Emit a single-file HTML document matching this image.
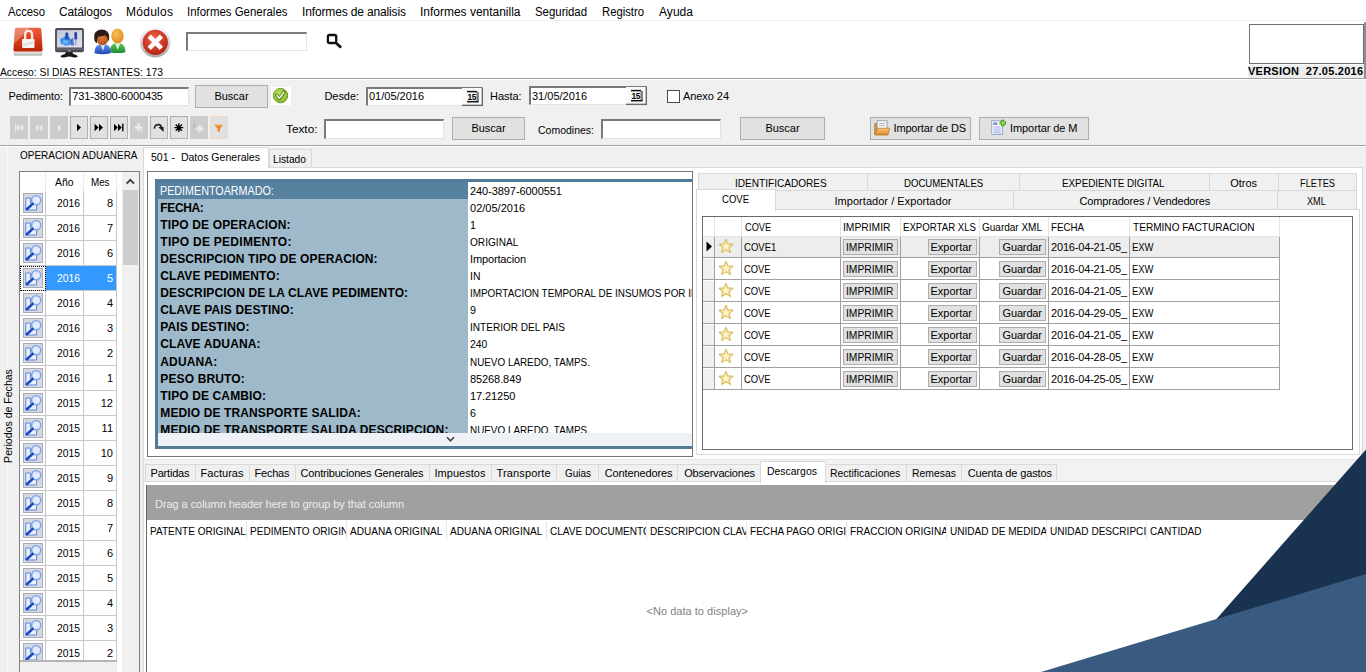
<!DOCTYPE html>
<html><head><meta charset="utf-8"><title>UI</title><style>html,body{margin:0;padding:0;}body{width:1366px;height:672px;overflow:hidden;position:relative;background:#f0f0f0;font-family:"Liberation Sans",sans-serif;}
.r{position:absolute;}
.t{position:absolute;white-space:pre;line-height:20px;font-family:"Liberation Sans",sans-serif;}
.ic{width:20px;height:20px;box-sizing:border-box;background:#d6dae2;border:1px solid #a9adb6;}
</style></head><body>
<div class="r" style="left:0px;top:0px;width:1366px;height:672px;background:#f0f0f0;"></div>
<div class="r" style="left:0px;top:0px;width:1366px;height:79px;background:#fff;"></div>
<div class="r" style="left:0px;top:20px;width:1366px;height:1px;background:#f0f0f0;"></div>
<div class="t" style="left:7.50px;top:2px;font-size:12px;transform:scaleX(0.9402);transform-origin:0 0;color:#000;">Acceso</div>
<div class="t" style="left:59.00px;top:2px;font-size:12px;letter-spacing:-0.129px;color:#000;">Catálogos</div>
<div class="t" style="left:126.00px;top:2px;font-size:12px;letter-spacing:0.274px;color:#000;">Módulos</div>
<div class="t" style="left:187.00px;top:2px;font-size:12px;transform:scaleX(0.9537);transform-origin:0 0;color:#000;">Informes Generales</div>
<div class="t" style="left:302.00px;top:2px;font-size:12px;letter-spacing:-0.143px;color:#000;">Informes de analisis</div>
<div class="t" style="left:420.00px;top:2px;font-size:12px;letter-spacing:-0.012px;color:#000;">Informes ventanilla</div>
<div class="t" style="left:535.00px;top:2px;font-size:12px;transform:scaleX(0.9505);transform-origin:0 0;color:#000;">Seguridad</div>
<div class="t" style="left:602.00px;top:2px;font-size:12px;transform:scaleX(0.9399);transform-origin:0 0;color:#000;">Registro</div>
<div class="t" style="left:659.00px;top:2px;font-size:12px;letter-spacing:0.048px;color:#000;">Ayuda</div>
<div class="r" style="left:186px;top:32px;width:121px;height:19px;background:#fff;border:1px solid #e3e3e3;box-sizing:border-box;border-top:2px solid #7a7a7a;border-left:2px solid #7a7a7a;"></div>
<div class="t" style="left:0.00px;top:62px;font-size:11px;transform:scaleX(0.9367);transform-origin:0 0;color:#000;">Acceso: SI DIAS RESTANTES: 173</div>
<div class="r" style="left:1249px;top:24px;width:115px;height:40px;background:#fff;border:1px solid #707070;box-sizing:border-box;"></div>
<div class="r" style="left:1248px;top:65px;width:116px;height:13px;background:#ededed;"></div>
<div class="r" style="left:1364px;top:22px;width:2px;height:56px;background:#8e8e8e;"></div>
<div class="t" style="left:1248.00px;top:61px;font-size:11px;font-weight:bold;letter-spacing:0.240px;color:#000;">VERSION  27.05.2016</div>
<div class="r" style="left:0px;top:78px;width:1366px;height:1px;background:#a0a0a0;"></div>
<div class="r" style="left:0px;top:79px;width:1366px;height:1px;background:#fff;"></div>
<div class="r" style="left:0px;top:145px;width:1366px;height:1px;background:#a0a0a0;"></div>
<div class="r" style="left:0px;top:146px;width:1366px;height:1px;background:#fff;"></div>
<div class="t" style="left:8.50px;top:86px;font-size:11px;letter-spacing:-0.127px;color:#000;">Pedimento:</div>
<div class="r" style="left:69px;top:87px;width:120px;height:19px;background:#fff;border:1px solid #e3e3e3;box-sizing:border-box;border-top:2px solid #7a7a7a;border-left:2px solid #7a7a7a;"></div>
<div class="t" style="left:72.30px;top:86px;font-size:11px;letter-spacing:-0.152px;color:#000;">731-3800-6000435</div>
<div class="r" style="left:195px;top:85px;width:73px;height:23px;background:#e1e1e1;border:1px solid #adadad;box-sizing:border-box;"></div>
<div class="t" style="left:214.38px;top:86px;font-size:11px;color:#000;">Buscar</div>
<div class="r" style="left:271px;top:87px;width:20px;height:18px;background:#fff;"></div>
<div class="t" style="left:324.50px;top:86px;font-size:11px;letter-spacing:-0.071px;color:#000;">Desde:</div>
<div class="r" style="left:366px;top:87px;width:117px;height:19px;background:#fff;border:1px solid #e3e3e3;box-sizing:border-box;border-top:2px solid #7a7a7a;border-left:2px solid #7a7a7a;"></div>
<div class="t" style="left:369.00px;top:86px;font-size:11px;letter-spacing:-0.006px;color:#000;">01/05/2016</div>
<div class="t" style="left:490.00px;top:86px;font-size:11px;letter-spacing:-0.058px;color:#000;">Hasta:</div>
<div class="r" style="left:529px;top:86px;width:118px;height:19px;background:#fff;border:1px solid #e3e3e3;box-sizing:border-box;border-top:2px solid #7a7a7a;border-left:2px solid #7a7a7a;"></div>
<div class="t" style="left:532.00px;top:86px;font-size:11px;letter-spacing:-0.006px;color:#000;">31/05/2016</div>
<div class="r" style="left:667px;top:90px;width:13px;height:13px;background:#fff;border:1px solid #4a4a4a;box-sizing:border-box;"></div>
<div class="t" style="left:683.00px;top:86px;font-size:11px;letter-spacing:-0.069px;color:#000;">Anexo 24</div>
<div class="t" style="left:285.50px;top:119px;font-size:11px;transform:scaleX(1.0733);transform-origin:0 0;color:#000;">Texto:</div>
<div class="r" style="left:324px;top:119px;width:120px;height:20px;background:#fff;border:1px solid #e3e3e3;box-sizing:border-box;border-top:2px solid #7a7a7a;border-left:2px solid #7a7a7a;"></div>
<div class="r" style="left:452px;top:117px;width:73px;height:23px;background:#e1e1e1;border:1px solid #adadad;box-sizing:border-box;"></div>
<div class="t" style="left:471.38px;top:118px;font-size:11px;color:#000;">Buscar</div>
<div class="t" style="left:538.00px;top:120px;font-size:11px;transform:scaleX(0.9541);transform-origin:0 0;color:#000;">Comodines:</div>
<div class="r" style="left:601px;top:119px;width:120px;height:20px;background:#fff;border:1px solid #e3e3e3;box-sizing:border-box;border-top:2px solid #7a7a7a;border-left:2px solid #7a7a7a;"></div>
<div class="r" style="left:740px;top:117px;width:85px;height:23px;background:#e1e1e1;border:1px solid #adadad;box-sizing:border-box;"></div>
<div class="t" style="left:765.38px;top:118px;font-size:11px;color:#000;">Buscar</div>
<div class="r" style="left:870px;top:117px;width:101px;height:23px;background:#e1e1e1;border:1px solid #adadad;box-sizing:border-box;"></div>
<div class="t" style="left:893.50px;top:118px;font-size:11px;letter-spacing:-0.160px;color:#000;">Importar de DS</div>
<div class="r" style="left:979px;top:117px;width:110px;height:23px;background:#e1e1e1;border:1px solid #adadad;box-sizing:border-box;"></div>
<div class="t" style="left:1010.00px;top:118px;font-size:11px;letter-spacing:-0.080px;color:#000;">Importar de M</div>
<div class="r" style="left:10px;top:116px;width:18px;height:23px;background:#cccccc;"></div>
<div class="r" style="left:30px;top:116px;width:18px;height:23px;background:#cccccc;"></div>
<div class="r" style="left:50px;top:116px;width:18px;height:23px;background:#cccccc;"></div>
<div class="r" style="left:70px;top:116px;width:18px;height:23px;background:#e1e1e1;border:1px solid #b0b0b0;box-sizing:border-box;"></div>
<div class="r" style="left:90px;top:116px;width:18px;height:23px;background:#e1e1e1;border:1px solid #b0b0b0;box-sizing:border-box;"></div>
<div class="r" style="left:110px;top:116px;width:18px;height:23px;background:#e1e1e1;border:1px solid #b0b0b0;box-sizing:border-box;"></div>
<div class="r" style="left:130px;top:116px;width:18px;height:23px;background:#cccccc;"></div>
<div class="r" style="left:150px;top:116px;width:18px;height:23px;background:#e1e1e1;border:1px solid #b0b0b0;box-sizing:border-box;"></div>
<div class="r" style="left:170px;top:116px;width:18px;height:23px;background:#e1e1e1;border:1px solid #b0b0b0;box-sizing:border-box;"></div>
<div class="r" style="left:190px;top:116px;width:18px;height:23px;background:#cccccc;"></div>
<div class="r" style="left:210px;top:116px;width:18px;height:23px;background:#e1e1e1;border:1px solid #f3d9bf;box-sizing:border-box;"></div>
<div class="t" style="left:19.50px;top:145px;font-size:11px;transform:scaleX(0.9067);transform-origin:0 0;color:#000;">OPERACION ADUANERA</div>
<div class="r" style="left:19px;top:171px;width:121px;height:501px;background:#fff;border:1px solid #808080;box-sizing:border-box;border-bottom:none;"></div>
<div class="r" style="left:122px;top:172px;width:17px;height:500px;background:#f0f0f0;"></div>
<div class="r" style="left:123px;top:190px;width:15px;height:75px;background:#cdcdcd;"></div>
<svg class="r" style="left:125px;top:177px" width="11" height="8" viewBox="0 0 11 8"><path d="M1.6 6.7 L5.3 2.8 L9 6.7" fill="none" stroke="#404040" stroke-width="1.9"/></svg>
<div class="r" style="left:20px;top:172px;width:96px;height:19px;background:#fff;"></div>
<div class="t" style="left:54.50px;top:172px;font-size:11px;transform:scaleX(0.9452);transform-origin:0 0;color:#000;">Año</div>
<div class="t" style="left:90.50px;top:172px;font-size:11px;transform:scaleX(0.8902);transform-origin:0 0;color:#000;">Mes</div>
<div class="r" style="left:45px;top:191px;width:1px;height:470px;background:#c8c8c8;"></div>
<div class="r" style="left:83px;top:191px;width:1px;height:470px;background:#c8c8c8;"></div>
<div class="r" style="left:116px;top:191px;width:1px;height:470px;background:#c8c8c8;"></div>
<div class="r" style="left:45px;top:172px;width:1px;height:19px;background:#ececec;"></div>
<div class="r" style="left:83px;top:172px;width:1px;height:19px;background:#ececec;"></div>
<div class="r" style="left:116px;top:172px;width:1px;height:19px;background:#ececec;"></div>
<div class="r" style="left:20px;top:215px;width:97px;height:1px;background:#c8c8c8;"></div>
<div class="t" style="left:57.00px;top:193px;font-size:11px;transform:scaleX(0.9399);transform-origin:0 0;color:#000;">2016</div>
<div class="t" style="left:-287.00px;width:400px;text-align:right;top:193px;font-size:11px;color:#000;">8</div>
<svg class="r" style="left:23px;top:193px" width="20" height="20"><use href="#mag"/></svg>
<div class="r" style="left:20px;top:240px;width:97px;height:1px;background:#c8c8c8;"></div>
<div class="t" style="left:57.00px;top:218px;font-size:11px;transform:scaleX(0.9399);transform-origin:0 0;color:#000;">2016</div>
<div class="t" style="left:-287.00px;width:400px;text-align:right;top:218px;font-size:11px;color:#000;">7</div>
<svg class="r" style="left:23px;top:218px" width="20" height="20"><use href="#mag"/></svg>
<div class="r" style="left:20px;top:265px;width:97px;height:1px;background:#c8c8c8;"></div>
<div class="t" style="left:57.00px;top:243px;font-size:11px;transform:scaleX(0.9399);transform-origin:0 0;color:#000;">2016</div>
<div class="t" style="left:-287.00px;width:400px;text-align:right;top:243px;font-size:11px;color:#000;">6</div>
<svg class="r" style="left:23px;top:243px" width="20" height="20"><use href="#mag"/></svg>
<div class="r" style="left:46px;top:266px;width:70px;height:24px;background:#3399ff;"></div>
<div class="r" style="left:20px;top:290px;width:97px;height:1px;background:#c8c8c8;"></div>
<div class="t" style="left:57.00px;top:268px;font-size:11px;transform:scaleX(0.9399);transform-origin:0 0;color:#fff;">2016</div>
<div class="t" style="left:-287.00px;width:400px;text-align:right;top:268px;font-size:11px;color:#fff;">5</div>
<svg class="r" style="left:23px;top:268px" width="20" height="20"><use href="#mag"/></svg>
<div class="r" style="left:20px;top:315px;width:97px;height:1px;background:#c8c8c8;"></div>
<div class="t" style="left:57.00px;top:293px;font-size:11px;transform:scaleX(0.9399);transform-origin:0 0;color:#000;">2016</div>
<div class="t" style="left:-287.00px;width:400px;text-align:right;top:293px;font-size:11px;color:#000;">4</div>
<svg class="r" style="left:23px;top:293px" width="20" height="20"><use href="#mag"/></svg>
<div class="r" style="left:20px;top:340px;width:97px;height:1px;background:#c8c8c8;"></div>
<div class="t" style="left:57.00px;top:318px;font-size:11px;transform:scaleX(0.9399);transform-origin:0 0;color:#000;">2016</div>
<div class="t" style="left:-287.00px;width:400px;text-align:right;top:318px;font-size:11px;color:#000;">3</div>
<svg class="r" style="left:23px;top:318px" width="20" height="20"><use href="#mag"/></svg>
<div class="r" style="left:20px;top:365px;width:97px;height:1px;background:#c8c8c8;"></div>
<div class="t" style="left:57.00px;top:343px;font-size:11px;transform:scaleX(0.9399);transform-origin:0 0;color:#000;">2016</div>
<div class="t" style="left:-287.00px;width:400px;text-align:right;top:343px;font-size:11px;color:#000;">2</div>
<svg class="r" style="left:23px;top:343px" width="20" height="20"><use href="#mag"/></svg>
<div class="r" style="left:20px;top:390px;width:97px;height:1px;background:#c8c8c8;"></div>
<div class="t" style="left:57.00px;top:368px;font-size:11px;transform:scaleX(0.9399);transform-origin:0 0;color:#000;">2016</div>
<div class="t" style="left:-287.00px;width:400px;text-align:right;top:368px;font-size:11px;color:#000;">1</div>
<svg class="r" style="left:23px;top:368px" width="20" height="20"><use href="#mag"/></svg>
<div class="r" style="left:20px;top:415px;width:97px;height:1px;background:#c8c8c8;"></div>
<div class="t" style="left:57.00px;top:393px;font-size:11px;transform:scaleX(0.9399);transform-origin:0 0;color:#000;">2015</div>
<div class="t" style="left:-287.00px;width:400px;text-align:right;top:393px;font-size:11px;color:#000;">12</div>
<svg class="r" style="left:23px;top:393px" width="20" height="20"><use href="#mag"/></svg>
<div class="r" style="left:20px;top:440px;width:97px;height:1px;background:#c8c8c8;"></div>
<div class="t" style="left:57.00px;top:418px;font-size:11px;transform:scaleX(0.9399);transform-origin:0 0;color:#000;">2015</div>
<div class="t" style="left:-287.00px;width:400px;text-align:right;top:418px;font-size:11px;color:#000;">11</div>
<svg class="r" style="left:23px;top:418px" width="20" height="20"><use href="#mag"/></svg>
<div class="r" style="left:20px;top:465px;width:97px;height:1px;background:#c8c8c8;"></div>
<div class="t" style="left:57.00px;top:443px;font-size:11px;transform:scaleX(0.9399);transform-origin:0 0;color:#000;">2015</div>
<div class="t" style="left:-287.00px;width:400px;text-align:right;top:443px;font-size:11px;color:#000;">10</div>
<svg class="r" style="left:23px;top:443px" width="20" height="20"><use href="#mag"/></svg>
<div class="r" style="left:20px;top:490px;width:97px;height:1px;background:#c8c8c8;"></div>
<div class="t" style="left:57.00px;top:468px;font-size:11px;transform:scaleX(0.9399);transform-origin:0 0;color:#000;">2015</div>
<div class="t" style="left:-287.00px;width:400px;text-align:right;top:468px;font-size:11px;color:#000;">9</div>
<svg class="r" style="left:23px;top:468px" width="20" height="20"><use href="#mag"/></svg>
<div class="r" style="left:20px;top:515px;width:97px;height:1px;background:#c8c8c8;"></div>
<div class="t" style="left:57.00px;top:493px;font-size:11px;transform:scaleX(0.9399);transform-origin:0 0;color:#000;">2015</div>
<div class="t" style="left:-287.00px;width:400px;text-align:right;top:493px;font-size:11px;color:#000;">8</div>
<svg class="r" style="left:23px;top:493px" width="20" height="20"><use href="#mag"/></svg>
<div class="r" style="left:20px;top:540px;width:97px;height:1px;background:#c8c8c8;"></div>
<div class="t" style="left:57.00px;top:518px;font-size:11px;transform:scaleX(0.9399);transform-origin:0 0;color:#000;">2015</div>
<div class="t" style="left:-287.00px;width:400px;text-align:right;top:518px;font-size:11px;color:#000;">7</div>
<svg class="r" style="left:23px;top:518px" width="20" height="20"><use href="#mag"/></svg>
<div class="r" style="left:20px;top:565px;width:97px;height:1px;background:#c8c8c8;"></div>
<div class="t" style="left:57.00px;top:543px;font-size:11px;transform:scaleX(0.9399);transform-origin:0 0;color:#000;">2015</div>
<div class="t" style="left:-287.00px;width:400px;text-align:right;top:543px;font-size:11px;color:#000;">6</div>
<svg class="r" style="left:23px;top:543px" width="20" height="20"><use href="#mag"/></svg>
<div class="r" style="left:20px;top:590px;width:97px;height:1px;background:#c8c8c8;"></div>
<div class="t" style="left:57.00px;top:568px;font-size:11px;transform:scaleX(0.9399);transform-origin:0 0;color:#000;">2015</div>
<div class="t" style="left:-287.00px;width:400px;text-align:right;top:568px;font-size:11px;color:#000;">5</div>
<svg class="r" style="left:23px;top:568px" width="20" height="20"><use href="#mag"/></svg>
<div class="r" style="left:20px;top:615px;width:97px;height:1px;background:#c8c8c8;"></div>
<div class="t" style="left:57.00px;top:593px;font-size:11px;transform:scaleX(0.9399);transform-origin:0 0;color:#000;">2015</div>
<div class="t" style="left:-287.00px;width:400px;text-align:right;top:593px;font-size:11px;color:#000;">4</div>
<svg class="r" style="left:23px;top:593px" width="20" height="20"><use href="#mag"/></svg>
<div class="r" style="left:20px;top:640px;width:97px;height:1px;background:#c8c8c8;"></div>
<div class="t" style="left:57.00px;top:618px;font-size:11px;transform:scaleX(0.9399);transform-origin:0 0;color:#000;">2015</div>
<div class="t" style="left:-287.00px;width:400px;text-align:right;top:618px;font-size:11px;color:#000;">3</div>
<svg class="r" style="left:23px;top:618px" width="20" height="20"><use href="#mag"/></svg>
<div class="r" style="left:20px;top:665px;width:97px;height:1px;background:#c8c8c8;"></div>
<div class="t" style="left:57.00px;top:643px;font-size:11px;transform:scaleX(0.9399);transform-origin:0 0;color:#000;">2015</div>
<div class="t" style="left:-287.00px;width:400px;text-align:right;top:643px;font-size:11px;color:#000;">2</div>
<svg class="r" style="left:23px;top:643px" width="20" height="20"><use href="#mag"/></svg>
<div class="r" style="left:20px;top:660px;width:97px;height:2px;background:#b4b4b4;"></div>
<div class="r" style="left:20px;top:662px;width:97px;height:10px;background:#f0f0f0;"></div>
<div class="r" style="left:20px;top:266px;width:26px;height:25px;border:1px dotted #000;box-sizing:border-box;"></div>
<div class="r" style="left:7px;top:147px;width:1px;height:525px;background:#fafafa;"></div>
<div class="t" style="left:-42px;top:406px;width:100px;text-align:center;font-size:11px;transform:rotate(-90deg) scaleX(0.9588);transform-origin:50% 50%;">Periodos de Fechas</div>
<div class="r" style="left:143px;top:167px;width:1220px;height:505px;background:#fff;border:1px solid #d9d9d9;box-sizing:border-box;border-bottom:none"></div>
<div class="r" style="left:143px;top:147px;width:126px;height:21px;background:#fff;border:1px solid #d9d9d9;box-sizing:border-box;border-bottom:none"></div>
<div class="t" style="left:151.00px;top:147px;font-size:11px;transform:scaleX(0.9584);transform-origin:0 0;color:#000;">501 -  Datos Generales</div>
<div class="r" style="left:269px;top:149px;width:43px;height:18px;background:#f0f0f0;border:1px solid #d9d9d9;box-sizing:border-box;border-bottom:none"></div>
<div class="t" style="left:272.50px;top:149px;font-size:11px;transform:scaleX(0.9303);transform-origin:0 0;color:#000;">Listado</div>
<div class="r" style="left:147px;top:171px;width:546px;height:286px;background:#fff;border:1px solid #767676;box-sizing:border-box;"></div>
<div class="r" style="left:148px;top:172px;width:544px;height:284px;overflow:hidden">
<div class="r" style="left:7px;top:7px;width:560px;height:270px;background:#517b98"></div>
<div class="r" style="left:10px;top:10px;width:310px;height:251px;background:#9eb9c9"></div>
<div class="r" style="left:10px;top:10px;width:310px;height:17px;background:#56819f"></div>
<div class="r" style="left:320px;top:10px;width:240px;height:251px;background:#fff"></div>
<div class="r" style="left:10px;top:261px;width:560px;height:13px;background:#eef2f6"></div>
<div class="r" style="left:10px;top:10px;width:534px;height:251px;overflow:hidden">
<div class="t" style="left:2.3px;top:-1px;font-size:12px;color:#fff;transform:scaleX(0.895);transform-origin:0 0">PEDIMENTOARMADO:</div>
<div class="t" style="left:312px;top:-1px;font-size:11px;letter-spacing:-0.072px">240-3897-6000551</div>
<div class="t" style="left:2.3px;top:16px;font-size:12px;font-weight:bold;letter-spacing:-0.366px">FECHA:</div>
<div class="t" style="left:312px;top:16px;font-size:11px;letter-spacing:0.016px">02/05/2016</div>
<div class="t" style="left:2.3px;top:33px;font-size:12px;font-weight:bold;letter-spacing:0.129px">TIPO DE OPERACION:</div>
<div class="t" style="left:312px;top:33px;font-size:11px;transform:scaleX(0.9700);transform-origin:0 0">1</div>
<div class="t" style="left:2.3px;top:50px;font-size:12px;font-weight:bold;letter-spacing:0.273px">TIPO DE PEDIMENTO:</div>
<div class="t" style="left:312px;top:50px;font-size:11px;transform:scaleX(0.9188);transform-origin:0 0">ORIGINAL</div>
<div class="t" style="left:2.3px;top:67px;font-size:12px;font-weight:bold;letter-spacing:0.090px">DESCRIPCION TIPO DE OPERACION:</div>
<div class="t" style="left:312px;top:67px;font-size:11px;letter-spacing:-0.137px">Importacion</div>
<div class="t" style="left:2.3px;top:84px;font-size:12px;font-weight:bold;letter-spacing:0.078px">CLAVE PEDIMENTO:</div>
<div class="t" style="left:312px;top:84px;font-size:11px;transform:scaleX(0.9455);transform-origin:0 0">IN</div>
<div class="t" style="left:2.3px;top:101px;font-size:12px;font-weight:bold;letter-spacing:0.121px">DESCRIPCION DE LA CLAVE PEDIMENTO:</div>
<div class="t" style="left:312px;top:101px;font-size:11px;transform:scaleX(0.9010);transform-origin:0 0">IMPORTACION TEMPORAL DE INSUMOS POR IMPORTADORAS</div>
<div class="t" style="left:2.3px;top:118px;font-size:12px;font-weight:bold;letter-spacing:0.144px">CLAVE PAIS DESTINO:</div>
<div class="t" style="left:312px;top:118px;font-size:11px;transform:scaleX(0.9700);transform-origin:0 0">9</div>
<div class="t" style="left:2.3px;top:135px;font-size:12px;font-weight:bold;letter-spacing:0.117px">PAIS DESTINO:</div>
<div class="t" style="left:312px;top:135px;font-size:11px;transform:scaleX(0.9133);transform-origin:0 0">INTERIOR DEL PAIS</div>
<div class="t" style="left:2.3px;top:152px;font-size:12px;font-weight:bold;letter-spacing:0.132px">CLAVE ADUANA:</div>
<div class="t" style="left:312px;top:152px;font-size:11px;transform:scaleX(0.9426);transform-origin:0 0">240</div>
<div class="t" style="left:2.3px;top:170px;font-size:12px;font-weight:bold;letter-spacing:0.149px">ADUANA:</div>
<div class="t" style="left:312px;top:170px;font-size:11px;transform:scaleX(0.8984);transform-origin:0 0">NUEVO LAREDO, TAMPS.</div>
<div class="t" style="left:2.3px;top:187px;font-size:12px;font-weight:bold;letter-spacing:0.133px">PESO BRUTO:</div>
<div class="t" style="left:312px;top:187px;font-size:11px;letter-spacing:-0.087px">85268.849</div>
<div class="t" style="left:2.3px;top:204px;font-size:12px;font-weight:bold;letter-spacing:0.119px">TIPO DE CAMBIO:</div>
<div class="t" style="left:312px;top:204px;font-size:11px;letter-spacing:-0.083px">17.21250</div>
<div class="t" style="left:2.3px;top:221px;font-size:12px;font-weight:bold;letter-spacing:0.121px">MEDIO DE TRANSPORTE SALIDA:</div>
<div class="t" style="left:312px;top:221px;font-size:11px;transform:scaleX(0.9700);transform-origin:0 0">6</div>
<div class="t" style="left:2.3px;top:238px;font-size:12px;font-weight:bold;letter-spacing:0.119px">MEDIO DE TRANSPORTE SALIDA DESCRIPCION:</div>
<div class="t" style="left:312px;top:238px;font-size:11px;transform:scaleX(0.8984);transform-origin:0 0">NUEVO LAREDO, TAMPS.</div>
</div>
<svg class="r" style="left:298px;top:264px" width="9" height="7" viewBox="0 0 9 7"><path d="M1 1.2 L4.5 4.8 L8 1.2" fill="none" stroke="#444" stroke-width="1.6"/></svg>
</div>
<div class="r" style="left:696px;top:209px;width:664px;height:246px;background:#fff;border:1px solid #d9d9d9;box-sizing:border-box;"></div>
<div class="r" style="left:698px;top:173px;width:170px;height:18px;background:#f0f0f0;border:1px solid #d9d9d9;box-sizing:border-box;"></div>
<div class="t" style="left:735.25px;top:173px;font-size:11px;transform:scaleX(0.9154);transform-origin:0 0;color:#000;">IDENTIFICADORES</div>
<div class="r" style="left:867px;top:173px;width:153px;height:18px;background:#f0f0f0;border:1px solid #d9d9d9;box-sizing:border-box;"></div>
<div class="t" style="left:903.50px;top:173px;font-size:11px;transform:scaleX(0.8722);transform-origin:0 0;color:#000;">DOCUMENTALES</div>
<div class="r" style="left:1019px;top:173px;width:191px;height:18px;background:#f0f0f0;border:1px solid #d9d9d9;box-sizing:border-box;"></div>
<div class="t" style="left:1062.00px;top:173px;font-size:11px;transform:scaleX(0.8935);transform-origin:0 0;color:#000;">EXPEDIENTE DIGITAL</div>
<div class="r" style="left:1209px;top:173px;width:70px;height:18px;background:#f0f0f0;border:1px solid #d9d9d9;box-sizing:border-box;"></div>
<div class="t" style="left:1230.25px;top:173px;font-size:11px;letter-spacing:-0.036px;color:#000;">Otros</div>
<div class="r" style="left:1278px;top:173px;width:79px;height:18px;background:#f0f0f0;border:1px solid #d9d9d9;box-sizing:border-box;"></div>
<div class="t" style="left:1299.75px;top:173px;font-size:11px;transform:scaleX(0.8420);transform-origin:0 0;color:#000;">FLETES</div>
<div class="r" style="left:775px;top:190px;width:239px;height:20px;background:#f0f0f0;border:1px solid #d9d9d9;box-sizing:border-box;"></div>
<div class="t" style="left:834.50px;top:191px;font-size:11px;letter-spacing:0.038px;color:#000;">Importador / Exportador</div>
<div class="r" style="left:1013px;top:190px;width:265px;height:20px;background:#f0f0f0;border:1px solid #d9d9d9;box-sizing:border-box;"></div>
<div class="t" style="left:1079.50px;top:191px;font-size:11px;letter-spacing:-0.164px;color:#000;">Compradores / Vendedores</div>
<div class="r" style="left:1277px;top:190px;width:80px;height:20px;background:#f0f0f0;border:1px solid #d9d9d9;box-sizing:border-box;"></div>
<div class="t" style="left:1307.25px;top:191px;font-size:11px;transform:scaleX(0.8290);transform-origin:0 0;color:#000;">XML</div>
<div class="r" style="left:696px;top:189px;width:80px;height:22px;background:#fff;border:1px solid #d9d9d9;box-sizing:border-box;border-bottom:none"></div>
<div class="t" style="left:721.50px;top:189px;font-size:11px;transform:scaleX(0.8661);transform-origin:0 0;color:#000;">COVE</div>
<div class="r" style="left:702px;top:216px;width:651px;height:234px;background:#fff;border:1px solid #696969;box-sizing:border-box;"></div>
<div class="r" style="left:703px;top:236px;width:576px;height:22px;background:#ededed;"></div>
<div class="r" style="left:703px;top:237px;width:11px;height:21px;background:#f0f0f0;"></div>
<div class="r" style="left:703px;top:257px;width:577px;height:1px;background:#a0a0a0;"></div>
<div class="r" style="left:703px;top:259px;width:11px;height:21px;background:#f0f0f0;"></div>
<div class="r" style="left:703px;top:279px;width:577px;height:1px;background:#a0a0a0;"></div>
<div class="r" style="left:703px;top:281px;width:11px;height:21px;background:#f0f0f0;"></div>
<div class="r" style="left:703px;top:301px;width:577px;height:1px;background:#a0a0a0;"></div>
<div class="r" style="left:703px;top:303px;width:11px;height:21px;background:#f0f0f0;"></div>
<div class="r" style="left:703px;top:323px;width:577px;height:1px;background:#a0a0a0;"></div>
<div class="r" style="left:703px;top:325px;width:11px;height:21px;background:#f0f0f0;"></div>
<div class="r" style="left:703px;top:345px;width:577px;height:1px;background:#a0a0a0;"></div>
<div class="r" style="left:703px;top:347px;width:11px;height:21px;background:#f0f0f0;"></div>
<div class="r" style="left:703px;top:367px;width:577px;height:1px;background:#a0a0a0;"></div>
<div class="r" style="left:703px;top:369px;width:11px;height:21px;background:#f0f0f0;"></div>
<div class="r" style="left:703px;top:389px;width:577px;height:1px;background:#a0a0a0;"></div>
<div class="r" style="left:714px;top:217px;width:1px;height:20px;background:#e4e4e4;"></div>
<div class="r" style="left:714px;top:236px;width:1px;height:154px;background:#a0a0a0;"></div>
<div class="r" style="left:741px;top:217px;width:1px;height:20px;background:#e4e4e4;"></div>
<div class="r" style="left:741px;top:236px;width:1px;height:154px;background:#a0a0a0;"></div>
<div class="r" style="left:840px;top:217px;width:1px;height:20px;background:#e4e4e4;"></div>
<div class="r" style="left:840px;top:236px;width:1px;height:154px;background:#a0a0a0;"></div>
<div class="r" style="left:900px;top:217px;width:1px;height:20px;background:#e4e4e4;"></div>
<div class="r" style="left:900px;top:236px;width:1px;height:154px;background:#a0a0a0;"></div>
<div class="r" style="left:979px;top:217px;width:1px;height:20px;background:#e4e4e4;"></div>
<div class="r" style="left:979px;top:236px;width:1px;height:154px;background:#a0a0a0;"></div>
<div class="r" style="left:1048px;top:217px;width:1px;height:20px;background:#e4e4e4;"></div>
<div class="r" style="left:1048px;top:236px;width:1px;height:154px;background:#a0a0a0;"></div>
<div class="r" style="left:1129px;top:217px;width:1px;height:20px;background:#e4e4e4;"></div>
<div class="r" style="left:1129px;top:236px;width:1px;height:154px;background:#a0a0a0;"></div>
<div class="r" style="left:1279px;top:217px;width:1px;height:20px;background:#e4e4e4;"></div>
<div class="r" style="left:1279px;top:236px;width:1px;height:154px;background:#a0a0a0;"></div>
<div class="r" style="left:703px;top:236px;width:577px;height:1px;background:#e4e4e4;"></div>
<div class="t" style="left:745.00px;top:217px;font-size:11px;transform:scaleX(0.8340);transform-origin:0 0;color:#000;">COVE</div>
<div class="t" style="left:843.00px;top:217px;font-size:11px;transform:scaleX(0.9365);transform-origin:0 0;color:#000;">IMPRIMIR</div>
<div class="t" style="left:903.00px;top:217px;font-size:11px;transform:scaleX(0.8759);transform-origin:0 0;color:#000;">EXPORTAR XLS</div>
<div class="t" style="left:982.00px;top:217px;font-size:11px;transform:scaleX(0.9087);transform-origin:0 0;color:#000;">Guardar XML</div>
<div class="t" style="left:1051.00px;top:217px;font-size:11px;transform:scaleX(0.8852);transform-origin:0 0;color:#000;">FECHA</div>
<div class="t" style="left:1132.50px;top:217px;font-size:11px;transform:scaleX(0.9162);transform-origin:0 0;color:#000;">TERMINO FACTURACION</div>
<div class="t" style="left:743.70px;top:237px;font-size:11px;transform:scaleX(0.8661);transform-origin:0 0;color:#000;">COVE1</div>
<div class="r" style="left:843px;top:239px;width:55px;height:16px;background:#e1e1e1;border:1px solid #adadad;box-sizing:border-box;"></div>
<div class="t" style="left:846.00px;top:237px;font-size:11px;transform:scaleX(0.9365);transform-origin:0 0;color:#000;">IMPRIMIR</div>
<div class="r" style="left:928px;top:239px;width:49px;height:16px;background:#e1e1e1;border:1px solid #adadad;box-sizing:border-box;"></div>
<div class="t" style="left:930.50px;top:237px;font-size:11px;letter-spacing:-0.010px;color:#000;">Exportar</div>
<div class="r" style="left:999px;top:239px;width:47px;height:16px;background:#e1e1e1;border:1px solid #adadad;box-sizing:border-box;"></div>
<div class="t" style="left:1002.50px;top:237px;font-size:11px;letter-spacing:-0.142px;color:#000;">Guardar</div>
<div class="t" style="left:1051.00px;top:237px;font-size:11px;letter-spacing:-0.176px;color:#000;">2016-04-21-05_</div>
<div class="t" style="left:1131.50px;top:237px;font-size:11px;transform:scaleX(0.8581);transform-origin:0 0;color:#000;">EXW</div>
<svg class="r" style="left:718px;top:238px" width="16" height="16" viewBox="0 0 16 16"><path d="M8 1.2 L10 5.9 L15 6.3 L11.2 9.6 L12.4 14.6 L8 11.9 L3.6 14.6 L4.8 9.6 L1 6.3 L6 5.9 Z" fill="#f5e49a" stroke="#d9bd63" stroke-width="1.1" stroke-linejoin="round"/><path d="M8 4.6 L9 7.2 L11.6 7.5 L9.6 9.2 L10.2 11.8 L8 10.4 L5.8 11.8 L6.4 9.2 L4.4 7.5 L7 7.2 Z" fill="#fcf4cf"/></svg>
<div class="t" style="left:743.70px;top:259px;font-size:11px;transform:scaleX(0.8533);transform-origin:0 0;color:#000;">COVE</div>
<div class="r" style="left:843px;top:261px;width:55px;height:16px;background:#e1e1e1;border:1px solid #adadad;box-sizing:border-box;"></div>
<div class="t" style="left:846.00px;top:259px;font-size:11px;transform:scaleX(0.9365);transform-origin:0 0;color:#000;">IMPRIMIR</div>
<div class="r" style="left:928px;top:261px;width:49px;height:16px;background:#e1e1e1;border:1px solid #adadad;box-sizing:border-box;"></div>
<div class="t" style="left:930.50px;top:259px;font-size:11px;letter-spacing:-0.010px;color:#000;">Exportar</div>
<div class="r" style="left:999px;top:261px;width:47px;height:16px;background:#e1e1e1;border:1px solid #adadad;box-sizing:border-box;"></div>
<div class="t" style="left:1002.50px;top:259px;font-size:11px;letter-spacing:-0.142px;color:#000;">Guardar</div>
<div class="t" style="left:1051.00px;top:259px;font-size:11px;letter-spacing:-0.176px;color:#000;">2016-04-21-05_</div>
<div class="t" style="left:1131.50px;top:259px;font-size:11px;transform:scaleX(0.8581);transform-origin:0 0;color:#000;">EXW</div>
<svg class="r" style="left:718px;top:260px" width="16" height="16" viewBox="0 0 16 16"><path d="M8 1.2 L10 5.9 L15 6.3 L11.2 9.6 L12.4 14.6 L8 11.9 L3.6 14.6 L4.8 9.6 L1 6.3 L6 5.9 Z" fill="#f5e49a" stroke="#d9bd63" stroke-width="1.1" stroke-linejoin="round"/><path d="M8 4.6 L9 7.2 L11.6 7.5 L9.6 9.2 L10.2 11.8 L8 10.4 L5.8 11.8 L6.4 9.2 L4.4 7.5 L7 7.2 Z" fill="#fcf4cf"/></svg>
<div class="t" style="left:743.70px;top:281px;font-size:11px;transform:scaleX(0.8533);transform-origin:0 0;color:#000;">COVE</div>
<div class="r" style="left:843px;top:283px;width:55px;height:16px;background:#e1e1e1;border:1px solid #adadad;box-sizing:border-box;"></div>
<div class="t" style="left:846.00px;top:281px;font-size:11px;transform:scaleX(0.9365);transform-origin:0 0;color:#000;">IMPRIMIR</div>
<div class="r" style="left:928px;top:283px;width:49px;height:16px;background:#e1e1e1;border:1px solid #adadad;box-sizing:border-box;"></div>
<div class="t" style="left:930.50px;top:281px;font-size:11px;letter-spacing:-0.010px;color:#000;">Exportar</div>
<div class="r" style="left:999px;top:283px;width:47px;height:16px;background:#e1e1e1;border:1px solid #adadad;box-sizing:border-box;"></div>
<div class="t" style="left:1002.50px;top:281px;font-size:11px;letter-spacing:-0.142px;color:#000;">Guardar</div>
<div class="t" style="left:1051.00px;top:281px;font-size:11px;letter-spacing:-0.176px;color:#000;">2016-04-21-05_</div>
<div class="t" style="left:1131.50px;top:281px;font-size:11px;transform:scaleX(0.8581);transform-origin:0 0;color:#000;">EXW</div>
<svg class="r" style="left:718px;top:282px" width="16" height="16" viewBox="0 0 16 16"><path d="M8 1.2 L10 5.9 L15 6.3 L11.2 9.6 L12.4 14.6 L8 11.9 L3.6 14.6 L4.8 9.6 L1 6.3 L6 5.9 Z" fill="#f5e49a" stroke="#d9bd63" stroke-width="1.1" stroke-linejoin="round"/><path d="M8 4.6 L9 7.2 L11.6 7.5 L9.6 9.2 L10.2 11.8 L8 10.4 L5.8 11.8 L6.4 9.2 L4.4 7.5 L7 7.2 Z" fill="#fcf4cf"/></svg>
<div class="t" style="left:743.70px;top:303px;font-size:11px;transform:scaleX(0.8533);transform-origin:0 0;color:#000;">COVE</div>
<div class="r" style="left:843px;top:305px;width:55px;height:16px;background:#e1e1e1;border:1px solid #adadad;box-sizing:border-box;"></div>
<div class="t" style="left:846.00px;top:303px;font-size:11px;transform:scaleX(0.9365);transform-origin:0 0;color:#000;">IMPRIMIR</div>
<div class="r" style="left:928px;top:305px;width:49px;height:16px;background:#e1e1e1;border:1px solid #adadad;box-sizing:border-box;"></div>
<div class="t" style="left:930.50px;top:303px;font-size:11px;letter-spacing:-0.010px;color:#000;">Exportar</div>
<div class="r" style="left:999px;top:305px;width:47px;height:16px;background:#e1e1e1;border:1px solid #adadad;box-sizing:border-box;"></div>
<div class="t" style="left:1002.50px;top:303px;font-size:11px;letter-spacing:-0.142px;color:#000;">Guardar</div>
<div class="t" style="left:1051.00px;top:303px;font-size:11px;letter-spacing:-0.176px;color:#000;">2016-04-29-05_</div>
<div class="t" style="left:1131.50px;top:303px;font-size:11px;transform:scaleX(0.8581);transform-origin:0 0;color:#000;">EXW</div>
<svg class="r" style="left:718px;top:304px" width="16" height="16" viewBox="0 0 16 16"><path d="M8 1.2 L10 5.9 L15 6.3 L11.2 9.6 L12.4 14.6 L8 11.9 L3.6 14.6 L4.8 9.6 L1 6.3 L6 5.9 Z" fill="#f5e49a" stroke="#d9bd63" stroke-width="1.1" stroke-linejoin="round"/><path d="M8 4.6 L9 7.2 L11.6 7.5 L9.6 9.2 L10.2 11.8 L8 10.4 L5.8 11.8 L6.4 9.2 L4.4 7.5 L7 7.2 Z" fill="#fcf4cf"/></svg>
<div class="t" style="left:743.70px;top:325px;font-size:11px;transform:scaleX(0.8533);transform-origin:0 0;color:#000;">COVE</div>
<div class="r" style="left:843px;top:327px;width:55px;height:16px;background:#e1e1e1;border:1px solid #adadad;box-sizing:border-box;"></div>
<div class="t" style="left:846.00px;top:325px;font-size:11px;transform:scaleX(0.9365);transform-origin:0 0;color:#000;">IMPRIMIR</div>
<div class="r" style="left:928px;top:327px;width:49px;height:16px;background:#e1e1e1;border:1px solid #adadad;box-sizing:border-box;"></div>
<div class="t" style="left:930.50px;top:325px;font-size:11px;letter-spacing:-0.010px;color:#000;">Exportar</div>
<div class="r" style="left:999px;top:327px;width:47px;height:16px;background:#e1e1e1;border:1px solid #adadad;box-sizing:border-box;"></div>
<div class="t" style="left:1002.50px;top:325px;font-size:11px;letter-spacing:-0.142px;color:#000;">Guardar</div>
<div class="t" style="left:1051.00px;top:325px;font-size:11px;letter-spacing:-0.176px;color:#000;">2016-04-21-05_</div>
<div class="t" style="left:1131.50px;top:325px;font-size:11px;transform:scaleX(0.8581);transform-origin:0 0;color:#000;">EXW</div>
<svg class="r" style="left:718px;top:326px" width="16" height="16" viewBox="0 0 16 16"><path d="M8 1.2 L10 5.9 L15 6.3 L11.2 9.6 L12.4 14.6 L8 11.9 L3.6 14.6 L4.8 9.6 L1 6.3 L6 5.9 Z" fill="#f5e49a" stroke="#d9bd63" stroke-width="1.1" stroke-linejoin="round"/><path d="M8 4.6 L9 7.2 L11.6 7.5 L9.6 9.2 L10.2 11.8 L8 10.4 L5.8 11.8 L6.4 9.2 L4.4 7.5 L7 7.2 Z" fill="#fcf4cf"/></svg>
<div class="t" style="left:743.70px;top:347px;font-size:11px;transform:scaleX(0.8533);transform-origin:0 0;color:#000;">COVE</div>
<div class="r" style="left:843px;top:349px;width:55px;height:16px;background:#e1e1e1;border:1px solid #adadad;box-sizing:border-box;"></div>
<div class="t" style="left:846.00px;top:347px;font-size:11px;transform:scaleX(0.9365);transform-origin:0 0;color:#000;">IMPRIMIR</div>
<div class="r" style="left:928px;top:349px;width:49px;height:16px;background:#e1e1e1;border:1px solid #adadad;box-sizing:border-box;"></div>
<div class="t" style="left:930.50px;top:347px;font-size:11px;letter-spacing:-0.010px;color:#000;">Exportar</div>
<div class="r" style="left:999px;top:349px;width:47px;height:16px;background:#e1e1e1;border:1px solid #adadad;box-sizing:border-box;"></div>
<div class="t" style="left:1002.50px;top:347px;font-size:11px;letter-spacing:-0.142px;color:#000;">Guardar</div>
<div class="t" style="left:1051.00px;top:347px;font-size:11px;letter-spacing:-0.176px;color:#000;">2016-04-28-05_</div>
<div class="t" style="left:1131.50px;top:347px;font-size:11px;transform:scaleX(0.8581);transform-origin:0 0;color:#000;">EXW</div>
<svg class="r" style="left:718px;top:348px" width="16" height="16" viewBox="0 0 16 16"><path d="M8 1.2 L10 5.9 L15 6.3 L11.2 9.6 L12.4 14.6 L8 11.9 L3.6 14.6 L4.8 9.6 L1 6.3 L6 5.9 Z" fill="#f5e49a" stroke="#d9bd63" stroke-width="1.1" stroke-linejoin="round"/><path d="M8 4.6 L9 7.2 L11.6 7.5 L9.6 9.2 L10.2 11.8 L8 10.4 L5.8 11.8 L6.4 9.2 L4.4 7.5 L7 7.2 Z" fill="#fcf4cf"/></svg>
<div class="t" style="left:743.70px;top:369px;font-size:11px;transform:scaleX(0.8533);transform-origin:0 0;color:#000;">COVE</div>
<div class="r" style="left:843px;top:371px;width:55px;height:16px;background:#e1e1e1;border:1px solid #adadad;box-sizing:border-box;"></div>
<div class="t" style="left:846.00px;top:369px;font-size:11px;transform:scaleX(0.9365);transform-origin:0 0;color:#000;">IMPRIMIR</div>
<div class="r" style="left:928px;top:371px;width:49px;height:16px;background:#e1e1e1;border:1px solid #adadad;box-sizing:border-box;"></div>
<div class="t" style="left:930.50px;top:369px;font-size:11px;letter-spacing:-0.010px;color:#000;">Exportar</div>
<div class="r" style="left:999px;top:371px;width:47px;height:16px;background:#e1e1e1;border:1px solid #adadad;box-sizing:border-box;"></div>
<div class="t" style="left:1002.50px;top:369px;font-size:11px;letter-spacing:-0.142px;color:#000;">Guardar</div>
<div class="t" style="left:1051.00px;top:369px;font-size:11px;letter-spacing:-0.176px;color:#000;">2016-04-25-05_</div>
<div class="t" style="left:1131.50px;top:369px;font-size:11px;transform:scaleX(0.8581);transform-origin:0 0;color:#000;">EXW</div>
<svg class="r" style="left:718px;top:370px" width="16" height="16" viewBox="0 0 16 16"><path d="M8 1.2 L10 5.9 L15 6.3 L11.2 9.6 L12.4 14.6 L8 11.9 L3.6 14.6 L4.8 9.6 L1 6.3 L6 5.9 Z" fill="#f5e49a" stroke="#d9bd63" stroke-width="1.1" stroke-linejoin="round"/><path d="M8 4.6 L9 7.2 L11.6 7.5 L9.6 9.2 L10.2 11.8 L8 10.4 L5.8 11.8 L6.4 9.2 L4.4 7.5 L7 7.2 Z" fill="#fcf4cf"/></svg>
<svg class="r" style="left:706px;top:241px" width="7" height="11" viewBox="0 0 7 11"><path d="M0.5 0.5 L6 5.5 L0.5 10.5 Z" fill="#000"/></svg>
<div class="r" style="left:144px;top:460px;width:1218px;height:21px;background:#f2f2f2;"></div>
<div class="r" style="left:144px;top:459px;width:1218px;height:1px;background:#e4e4e4;"></div>
<div class="r" style="left:144px;top:481px;width:1218px;height:1px;background:#d9d9d9;"></div>
<div class="r" style="left:145px;top:464px;width:51px;height:18px;background:#f0f0f0;border:1px solid #d9d9d9;box-sizing:border-box;"></div>
<div class="t" style="left:150.50px;top:463px;font-size:11px;letter-spacing:-0.193px;color:#000;">Partidas</div>
<div class="r" style="left:195px;top:464px;width:55px;height:18px;background:#f0f0f0;border:1px solid #d9d9d9;box-sizing:border-box;"></div>
<div class="t" style="left:200.50px;top:463px;font-size:11px;letter-spacing:0.030px;color:#000;">Facturas</div>
<div class="r" style="left:249px;top:464px;width:47px;height:18px;background:#f0f0f0;border:1px solid #d9d9d9;box-sizing:border-box;"></div>
<div class="t" style="left:254.50px;top:463px;font-size:11px;letter-spacing:-0.214px;color:#000;">Fechas</div>
<div class="r" style="left:295px;top:464px;width:135px;height:18px;background:#f0f0f0;border:1px solid #d9d9d9;box-sizing:border-box;"></div>
<div class="t" style="left:300.50px;top:463px;font-size:11px;letter-spacing:-0.182px;color:#000;">Contribuciones Generales</div>
<div class="r" style="left:429px;top:464px;width:63px;height:18px;background:#f0f0f0;border:1px solid #d9d9d9;box-sizing:border-box;"></div>
<div class="t" style="left:434.50px;top:463px;font-size:11px;letter-spacing:0.032px;color:#000;">Impuestos</div>
<div class="r" style="left:491px;top:464px;width:66px;height:18px;background:#f0f0f0;border:1px solid #d9d9d9;box-sizing:border-box;"></div>
<div class="t" style="left:496.50px;top:463px;font-size:11px;letter-spacing:0.135px;color:#000;">Transporte</div>
<div class="r" style="left:556px;top:464px;width:43px;height:18px;background:#f0f0f0;border:1px solid #d9d9d9;box-sizing:border-box;"></div>
<div class="t" style="left:564.50px;top:463px;font-size:11px;transform:scaleX(0.9048);transform-origin:0 0;color:#000;">Guias</div>
<div class="r" style="left:598px;top:464px;width:80px;height:18px;background:#f0f0f0;border:1px solid #d9d9d9;box-sizing:border-box;"></div>
<div class="t" style="left:604.80px;top:463px;font-size:11px;letter-spacing:-0.119px;color:#000;">Contenedores</div>
<div class="r" style="left:677px;top:464px;width:84px;height:18px;background:#f0f0f0;border:1px solid #d9d9d9;box-sizing:border-box;"></div>
<div class="t" style="left:684.20px;top:463px;font-size:11px;letter-spacing:-0.206px;color:#000;">Observaciones</div>
<div class="r" style="left:760px;top:461px;width:66px;height:22px;background:#fff;border:1px solid #d9d9d9;box-sizing:border-box;border-bottom:none"></div>
<div class="t" style="left:767.40px;top:461px;font-size:11px;transform:scaleX(0.9491);transform-origin:0 0;color:#000;">Descargos</div>
<div class="r" style="left:825px;top:464px;width:82px;height:18px;background:#f0f0f0;border:1px solid #d9d9d9;box-sizing:border-box;"></div>
<div class="t" style="left:830.00px;top:463px;font-size:11px;transform:scaleX(0.9503);transform-origin:0 0;color:#000;">Rectificaciones</div>
<div class="r" style="left:906px;top:464px;width:56px;height:18px;background:#f0f0f0;border:1px solid #d9d9d9;box-sizing:border-box;"></div>
<div class="t" style="left:911.50px;top:463px;font-size:11px;transform:scaleX(0.9470);transform-origin:0 0;color:#000;">Remesas</div>
<div class="r" style="left:961px;top:464px;width:96px;height:18px;background:#f0f0f0;border:1px solid #d9d9d9;box-sizing:border-box;"></div>
<div class="t" style="left:967.70px;top:463px;font-size:11px;letter-spacing:-0.129px;color:#000;">Cuenta de gastos</div>
<div class="r" style="left:147px;top:485px;width:1215px;height:35px;background:#a0a0a0;"></div>
<div class="t" style="left:155.00px;top:494px;font-size:11px;letter-spacing:-0.061px;color:#ececec;">Drag a column header here to group by that column</div>
<div class="r" style="left:146px;top:485px;width:1px;height:187px;background:#696969;"></div>
<div class="t" style="left:150px;top:521px;width:105.5px;overflow:hidden;font-size:11px;transform:scaleX(0.915);transform-origin:0 0">PATENTE ORIGINAL</div>
<div class="r" style="left:246px;top:521px;width:1px;height:19px;background:#e8e8e8;"></div>
<div class="t" style="left:250px;top:521px;width:105.5px;overflow:hidden;font-size:11px;transform:scaleX(0.915);transform-origin:0 0">PEDIMENTO ORIGINAL</div>
<div class="r" style="left:346px;top:521px;width:1px;height:19px;background:#e8e8e8;"></div>
<div class="t" style="left:350px;top:521px;width:105.5px;overflow:hidden;font-size:11px;transform:scaleX(0.915);transform-origin:0 0">ADUANA ORIGINAL</div>
<div class="r" style="left:446px;top:521px;width:1px;height:19px;background:#e8e8e8;"></div>
<div class="t" style="left:450px;top:521px;width:105.5px;overflow:hidden;font-size:11px;transform:scaleX(0.915);transform-origin:0 0">ADUANA ORIGINAL</div>
<div class="r" style="left:546px;top:521px;width:1px;height:19px;background:#e8e8e8;"></div>
<div class="t" style="left:550px;top:521px;width:105.5px;overflow:hidden;font-size:11px;transform:scaleX(0.915);transform-origin:0 0">CLAVE DOCUMENTO</div>
<div class="r" style="left:646px;top:521px;width:1px;height:19px;background:#e8e8e8;"></div>
<div class="t" style="left:650px;top:521px;width:105.5px;overflow:hidden;font-size:11px;transform:scaleX(0.915);transform-origin:0 0">DESCRIPCION CLAVE</div>
<div class="r" style="left:746px;top:521px;width:1px;height:19px;background:#e8e8e8;"></div>
<div class="t" style="left:750px;top:521px;width:105.5px;overflow:hidden;font-size:11px;transform:scaleX(0.915);transform-origin:0 0">FECHA PAGO ORIGINAL</div>
<div class="r" style="left:846px;top:521px;width:1px;height:19px;background:#e8e8e8;"></div>
<div class="t" style="left:850px;top:521px;width:105.5px;overflow:hidden;font-size:11px;transform:scaleX(0.915);transform-origin:0 0">FRACCION ORIGINAL</div>
<div class="r" style="left:946px;top:521px;width:1px;height:19px;background:#e8e8e8;"></div>
<div class="t" style="left:950px;top:521px;width:105.5px;overflow:hidden;font-size:11px;transform:scaleX(0.915);transform-origin:0 0">UNIDAD DE MEDIDA</div>
<div class="r" style="left:1046px;top:521px;width:1px;height:19px;background:#e8e8e8;"></div>
<div class="t" style="left:1050px;top:521px;width:105.5px;overflow:hidden;font-size:11px;transform:scaleX(0.915);transform-origin:0 0">UNIDAD DESCRIPCION</div>
<div class="r" style="left:1146px;top:521px;width:1px;height:19px;background:#e8e8e8;"></div>
<div class="t" style="left:1150px;top:521px;width:105.5px;overflow:hidden;font-size:11px;transform:scaleX(0.915);transform-origin:0 0">CANTIDAD</div>
<div class="t" style="left:646.50px;top:601px;font-size:11px;letter-spacing:0.031px;color:#7f7f7f;">&lt;No data to display&gt;</div>
<svg class="r" style="left:0;top:0" width="360" height="80" viewBox="0 0 360 80">
<defs>
<linearGradient id="gRed" x1="0" y1="0" x2="0" y2="1"><stop offset="0" stop-color="#ec6040"/><stop offset="0.55" stop-color="#d63a18"/><stop offset="1" stop-color="#b82608"/></linearGradient>
<linearGradient id="gBase" x1="0" y1="0" x2="0" y2="1"><stop offset="0" stop-color="#f4eeee"/><stop offset="1" stop-color="#c9c3c3"/></linearGradient>
<linearGradient id="gScr" x1="0" y1="0" x2="1" y2="1"><stop offset="0" stop-color="#c2c6d8"/><stop offset="1" stop-color="#e3e3ee"/></linearGradient>
<radialGradient id="gX" cx="0.45" cy="0.35" r="0.7"><stop offset="0" stop-color="#f0654a"/><stop offset="1" stop-color="#b41c0c"/></radialGradient>
<linearGradient id="gRing" x1="0" y1="0" x2="0" y2="1"><stop offset="0" stop-color="#fbfbfb"/><stop offset="1" stop-color="#a9a9a9"/></linearGradient>
<radialGradient id="gH1" cx="0.4" cy="0.35" r="0.7"><stop offset="0" stop-color="#f7c25c"/><stop offset="1" stop-color="#e08a1c"/></radialGradient>
<radialGradient id="gH2" cx="0.45" cy="0.4" r="0.7"><stop offset="0" stop-color="#e07a38"/><stop offset="1" stop-color="#a8481a"/></radialGradient>
<linearGradient id="gBl" x1="0" y1="0" x2="0" y2="1"><stop offset="0" stop-color="#5c8ff0"/><stop offset="1" stop-color="#1f47b8"/></linearGradient>
<linearGradient id="gGr" x1="0" y1="0" x2="0" y2="1"><stop offset="0" stop-color="#5cc85c"/><stop offset="1" stop-color="#1f8a2c"/></linearGradient>
</defs>
<!-- lock -->
<path d="M13.2 50.4 L42.8 50.4 L42.5 53.8 Q42.3 55.4 40.6 55.4 L15.4 55.4 Q13.7 55.4 13.5 53.8 Z" fill="url(#gBase)"/>
<path d="M13.6 54.2 L42.4 54.2 L42.3 55 Q42 55.6 41 55.6 L15 55.6 Q14 55.6 13.7 55 Z" fill="#aab8b0" opacity="0.8"/>
<path d="M16.4 27.7 L39.8 27.7 Q41.2 27.7 41.3 29.2 L42.6 49.4 Q42.7 51.4 40.8 51.4 L15.2 51.4 Q13.3 51.4 13.4 49.4 L14.9 29.2 Q15 27.7 16.4 27.7 Z" fill="url(#gRed)"/>
<path d="M16.4 27.7 L30 27.7 L14 44 L14.9 29.2 Q15 27.7 16.4 27.7 Z" fill="#fff" opacity="0.28"/>
<path d="M25.1 39.6 L25.1 35 Q25.1 30.9 28.6 30.9 Q32.1 30.9 32.1 35 L32.1 39.6" fill="none" stroke="#fbe9e6" stroke-width="2.3"/>
<rect x="22.1" y="39" width="12.4" height="8.9" rx="0.8" fill="#fbf3f1"/>
<path d="M23 45.4 L33.8 41.8" stroke="#d6dfe4" stroke-width="1.8"/>
<!-- monitor -->
<path d="M60.4 56.6 Q62 53.6 69.2 53.4 Q76.4 53.6 77.8 56.6 Q76 58 73 57.2 Q69.2 56 65.2 57.2 Q62 58 60.4 56.6 Z" fill="#141418"/>
<path d="M65.8 51 L72.4 51 L73.4 55.4 L64.8 55.4 Z" fill="#1d1d22"/>
<rect x="55.1" y="28" width="28.8" height="24.2" rx="1.8" fill="#4b4b53"/>
<rect x="55.6" y="48.6" width="27.8" height="1" fill="#77777f"/>
<rect x="56.9" y="30.1" width="25.2" height="17.4" fill="url(#gScr)"/>
<path d="M60.4 41.4 Q59.8 38 63 37.8 Q64.4 35.6 67 36.8 Q70 36 70.6 39 Q73 40 71.6 42.8 Q71 45.8 67.8 45 Q65.4 46.8 63.6 44.6 Q60.8 44.6 60.4 41.4 Z" fill="#3c92ee"/>
<path d="M62.6 42 Q63.6 39.6 66 40.6 Q68 39.8 68.6 42 Q68 44 65.6 43.6 Q63.4 44.4 62.6 42 Z" fill="#6ab4ff"/>
<path d="M65.4 33 Q66.8 31.4 68.2 33 L68.8 39.6 L65 39.6 Z" fill="#2a4fae"/>
<path d="M74.4 32.6 Q75.8 31.2 77 32.6 L77.2 39.4 L74.4 39.4 Z" fill="#27439c"/>
<path d="M70.6 40 L73 37.4 L74.2 45.6 L71 45.6 Z" fill="#3c5fb0" opacity="0.8"/>
<rect x="75.2" y="39.4" width="1.2" height="5.6" fill="#8e9cc0"/>
<circle cx="69.4" cy="50.6" r="0.9" fill="#b8b8c4"/>
<!-- people -->
<path d="M110 52.2 Q109.8 45.4 114.4 43.6 L121 43.6 Q125.6 45.4 125.4 52.2 Q117.6 54 110 52.2 Z" fill="url(#gGr)"/>
<path d="M115.2 43.6 L117.7 49.8 L120.2 43.6 Z" fill="#eef6e8"/>
<ellipse cx="117.5" cy="35.9" rx="6.2" ry="7.4" fill="url(#gH1)"/>
<path d="M94.6 53.2 Q94.2 46.4 99.2 44.6 L106.4 44.6 Q111 46.4 110.8 53.2 Q102.6 55.2 94.6 53.2 Z" fill="url(#gBl)"/>
<path d="M100.8 44.8 L102.9 51 L105 44.8 Z" fill="#e4ecfb"/>
<ellipse cx="102.4" cy="39.2" rx="5.6" ry="6" fill="url(#gH2)"/>
<path d="M94.4 40 Q93 30.4 101 29.6 Q109.4 29.6 109.2 37.4 Q109.2 40.4 108 41.6 Q108.2 36.6 104.8 35.2 Q101 36.6 98 36.4 Q96.6 39.4 97 43.2 Q95 42.6 94.4 40 Z" fill="#2a1b14"/>
<!-- red X -->
<circle cx="155.3" cy="42.3" r="15.2" fill="url(#gRing)"/>
<circle cx="155.3" cy="42.3" r="12.6" fill="url(#gX)"/>
<path d="M149.2 36.2 L161.4 48.4 M161.4 36.2 L149.2 48.4" stroke="#fff" stroke-width="4.6" stroke-linecap="butt"/>
<!-- search -->
<rect x="327.9" y="35" width="8.3" height="8" rx="1.6" fill="#fff" stroke="#111" stroke-width="2.3"/>
<path d="M335.8 42.8 L340.2 46.8" stroke="#111" stroke-width="2.9" stroke-linecap="round"/>
</svg>
<svg class="r" style="left:272px;top:87px" width="18" height="18" viewBox="0 0 18 18">
<defs><radialGradient id="gChk" cx="0.4" cy="0.3" r="0.8"><stop offset="0" stop-color="#b5dc5c"/><stop offset="1" stop-color="#86b82a"/></radialGradient></defs>
<circle cx="8.5" cy="8.6" r="7.2" fill="url(#gChk)" stroke="#6b9a22" stroke-width="1"/>
<path d="M4.6 8.2 L7.4 11.6 L12 5.2" fill="none" stroke="#4f7d14" stroke-width="3.2" stroke-linejoin="round" stroke-linecap="round"/>
<path d="M4.9 8.4 L7.4 11.2 L11.7 5.5" fill="none" stroke="#f4faea" stroke-width="1.5" stroke-linejoin="round" stroke-linecap="round"/>
</svg>
<svg class="r" style="left:462px;top:88px" width="21" height="19" viewBox="0 0 21 19">
<rect x="0" y="0" width="21" height="19" fill="#fbfbfb"/>
<path d="M0 17.4 L21 17.4" stroke="#696969" stroke-width="1.5"/>
<path d="M20.3 0 L20.3 18" stroke="#696969" stroke-width="1.4"/>
<path d="M5 3.6 L15.2 3.6" stroke="#111" stroke-width="1.5"/>
<path d="M5 13.7 L16.4 13.7" stroke="#111" stroke-width="1.5"/>
<path d="M16 4 L16 14.2" stroke="#222" stroke-width="1.1"/>
<path d="M14.8 4.4 L14.8 13" stroke="#777" stroke-width="0.7"/>
<text x="5.6" y="11.7" font-family="Liberation Sans" font-weight="bold" font-size="8.4px" letter-spacing="-0.5" fill="#000">15</text>
</svg>
<svg class="r" style="left:626px;top:87px" width="21" height="19" viewBox="0 0 21 19">
<rect x="0" y="0" width="21" height="19" fill="#fbfbfb"/>
<path d="M0 17.4 L21 17.4" stroke="#696969" stroke-width="1.5"/>
<path d="M20.3 0 L20.3 18" stroke="#696969" stroke-width="1.4"/>
<path d="M5 3.6 L15.2 3.6" stroke="#111" stroke-width="1.5"/>
<path d="M5 13.7 L16.4 13.7" stroke="#111" stroke-width="1.5"/>
<path d="M16 4 L16 14.2" stroke="#222" stroke-width="1.1"/>
<path d="M14.8 4.4 L14.8 13" stroke="#777" stroke-width="0.7"/>
<text x="5.6" y="11.7" font-family="Liberation Sans" font-weight="bold" font-size="8.4px" letter-spacing="-0.5" fill="#000">15</text>
</svg>
<svg class="r" style="left:10px;top:116px" width="18" height="23" viewBox="0 0 18 23"><path d="M5.6 8 L5.6 15.4" stroke="#ececec" stroke-width="1.3"/><path d="M9.6 8 L6.4 11.7 L9.6 15.4 Z M13.2 8 L10 11.7 L13.2 15.4 Z" fill="#ececec"/></svg>
<svg class="r" style="left:30px;top:116px" width="18" height="23" viewBox="0 0 18 23"><path d="M8.6 8 L5.4 11.7 L8.6 15.4 Z M12.6 8 L9.4 11.7 L12.6 15.4 Z" fill="#ececec"/></svg>
<svg class="r" style="left:50px;top:116px" width="18" height="23" viewBox="0 0 18 23"><path d="M10.4 8 L7.2 11.7 L10.4 15.4 Z" fill="#ececec"/></svg>
<svg class="r" style="left:70px;top:116px" width="18" height="23" viewBox="0 0 18 23"><path d="M7 7.8 L11 11.5 L7 15.2 Z" fill="#000"/></svg>
<svg class="r" style="left:90px;top:116px" width="18" height="23" viewBox="0 0 18 23"><path d="M4.6 7.8 L8.6 11.5 L4.6 15.2 Z M9 7.8 L13 11.5 L9 15.2 Z" fill="#000"/></svg>
<svg class="r" style="left:110px;top:116px" width="18" height="23" viewBox="0 0 18 23"><path d="M4 7.8 L7.8 11.5 L4 15.2 Z M8 7.8 L11.8 11.5 L8 15.2 Z" fill="#000"/><path d="M12.8 7.8 L12.8 15.2" stroke="#000" stroke-width="1.4"/></svg>
<svg class="r" style="left:130px;top:116px" width="18" height="23" viewBox="0 0 18 23"><path d="M8.6 7.6 L8.6 15.6 M4.6 11.6 L12.6 11.6" stroke="#ececec" stroke-width="2.2"/><rect x="10" y="13" width="3" height="3" fill="#d9d9d9"/></svg>
<svg class="r" style="left:150px;top:116px" width="18" height="23" viewBox="0 0 18 23"><path d="M4.4 12.6 Q4.6 8.4 8.6 8.6 Q11 8.8 11.4 11.4" fill="none" stroke="#222" stroke-width="1.7"/><path d="M8.2 11 L13.6 11 L13.6 16 Z" fill="#222" transform="rotate(0)"/></svg>
<svg class="r" style="left:170px;top:116px" width="18" height="23" viewBox="0 0 18 23"><path d="M8.8 7.2 L8.8 16 M4.4 11.6 L13.2 11.6 M5.7 8.5 L11.9 14.7 M11.9 8.5 L5.7 14.7" stroke="#000" stroke-width="1.3"/></svg>
<svg class="r" style="left:190px;top:116px" width="18" height="23" viewBox="0 0 18 23"><path d="M9.6 8.6 L9.6 16.6 M5.6 12.6 L13.6 12.6 M6.8 9.8 L12.4 15.4 M12.4 9.8 L6.8 15.4" stroke="#ececec" stroke-width="1.2"/><path d="M3.4 7 L6.4 9.6 L3.4 12 Z" fill="#b9b9b9"/></svg>
<svg class="r" style="left:210px;top:116px" width="18" height="23" viewBox="0 0 18 23"><path d="M5.2 8.2 L12.4 8.2 L12.4 10 L10 12.4 L10 15.6 L7.6 15.6 L7.6 12.4 L5.2 10 Z" fill="#e8872a"/><rect x="5.6" y="8.2" width="6.4" height="1.3" fill="#f7cf9a"/></svg>
<svg class="r" style="left:873px;top:119px" width="18" height="18" viewBox="0 0 18 18">
<defs><linearGradient id="gFo" x1="0" y1="0" x2="0" y2="1"><stop offset="0" stop-color="#f6c67c"/><stop offset="1" stop-color="#d98a26"/></linearGradient></defs>
<path d="M1.6 4.6 L4 4.6 L4 15.4 L1.6 15.4 Z" fill="#e0a050" stroke="#b97a2c" stroke-width="0.8"/>
<rect x="4.2" y="1.8" width="9.8" height="9" fill="#fdfdfd" stroke="#8e96a6" stroke-width="0.9"/>
<path d="M6 4.4 L12.2 4.4 M6 6.6 L12.2 6.6" stroke="#9aa6c0" stroke-width="0.9"/>
<path d="M4.6 9.2 L16.6 9.2 L15 16 L2 16 Z" fill="url(#gFo)" stroke="#b97a2c" stroke-width="0.8" stroke-linejoin="round"/>
</svg>
<svg class="r" style="left:990px;top:119px" width="18" height="18" viewBox="0 0 18 18">
<rect x="1.8" y="1.8" width="10.6" height="13.6" fill="#fbfcff" stroke="#8d9ac0" stroke-width="0.9"/>
<rect x="3.4" y="3.4" width="4" height="2.6" fill="#7d92d0"/>
<path d="M3.4 8 L10.8 8 M3.4 10 L10.8 10 M3.4 12 L10.8 12 M3.4 13.8 L10.8 13.8" stroke="#8fa2dc" stroke-width="0.9"/>
<path d="M12.8 0.8 L12.8 7.2 M9.6 4 L16 4" stroke="#3f8f1f" stroke-width="3"/>
<path d="M12.8 1.6 L12.8 6.4 M10.4 4 L15.2 4" stroke="#9bdc4c" stroke-width="1.4"/>
</svg>
<svg width="0" height="0" style="position:absolute"><defs><symbol id="mag" viewBox="0 0 20 20">
<rect x="0.5" y="0.5" width="19" height="19" fill="#d5d9e2" stroke="#a6abb6"/>
<path d="M2.8 5 L7.4 5 L7.4 10.2 L13.6 10.2 L13.6 17 L2.8 17 Z" fill="#eaf1fd" stroke="#5f83d6" stroke-width="1"/>
<circle cx="13.2" cy="7.3" r="4.6" fill="#cfe0fb" stroke="#7aa0ea" stroke-width="1.3"/>
<circle cx="13.2" cy="7.3" r="3" fill="#e3edfe"/>
<path d="M9.7 10.9 L3.8 16.2" stroke="#1c49c2" stroke-width="2.6" stroke-linecap="round"/>
</symbol></defs></svg>
<svg class="r" style="left:0;top:0" width="1366" height="672" viewBox="0 0 1366 672"><polygon points="1366,449.5 1216,619.5 1366,619.5" fill="#19324f"/><polygon points="1366,574 1040,672.3 1366,672.3" fill="#3a5b80"/></svg>
</body></html>
